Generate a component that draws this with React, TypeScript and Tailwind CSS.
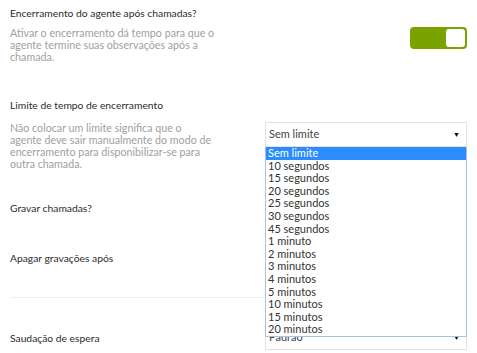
const options = [
  "Sem limite",
  "10 segundos",
  "15 segundos",
  "20 segundos",
  "25 segundos",
  "30 segundos",
  "45 segundos",
  "1 minuto",
  "2 minutos",
  "3 minutos",
  "4 minutos",
  "5 minutos",
  "10 minutos",
  "15 minutos",
  "20 minutos",
];

const SelectBox = ({ value }: { value: string }) => (
  <div className="flex h-[25px] w-[202px] items-center justify-between border border-[#e3e3e3] bg-white pl-[3px] pr-[6px] text-[11px] text-[#444]">
    <span>{value}</span>
    <span className="text-[7px] leading-none text-black">▼</span>
  </div>
);

export default function App() {
  return (
    <div className="h-[353px] w-[477px] overflow-hidden bg-white px-[10px] font-['Lato',sans-serif] text-[11px]">
      {/* wrap-up toggle */}
      <div className="flex justify-between pt-[6px]">
        <div className="w-[220px]">
          <h3 className="text-[10.3px] leading-[14px] text-[#2b2b2b]">
            Encerramento do agente após chamadas?
          </h3>
          <p className="mt-[7px] text-[10.7px] leading-[12px] text-[#a0a0a0]">
            Ativar o encerramento dá tempo para que o
            <br />
            agente termine suas observações após a
            <br />
            chamada.
          </p>
        </div>
        <div className="mt-[21px] flex h-[22px] w-[57px] justify-end rounded-[4px] bg-[#7aa300] p-[2px]">
          <div className="h-full w-[19px] rounded-[3px] bg-white" />
        </div>
      </div>

      {/* wrap-up limit */}
      <div className="mt-[35px] flex justify-between">
        <div className="w-[230px]">
          <h3 className="text-[10.3px] leading-[14px] text-[#2b2b2b]">
            Limite de tempo de encerramento
          </h3>
          <p className="mt-[10px] text-[10.7px] leading-[12px] text-[#a0a0a0]">
            Não colocar um limite significa que o
            <br />
            agente deve sair manualmente do modo de
            <br />
            encerramento para disponibilizar-se para
            <br />
            outra chamada.
          </p>
        </div>
        <div className="relative z-10 mt-[24px]">
          <SelectBox value="Sem limite" />
          <ul className="absolute left-0 top-[25px] w-[202px] border border-t-0 border-[#a9c1e6] bg-white text-[11px] text-[#333]">
            {options.map((o, i) => (
              <li
                key={o}
                className={`flex h-[12.6px] items-center pl-[2px] ${
                  i === 0 ? "bg-[#2a8cff] text-white" : ""
                }`}
              >
                {o}
              </li>
            ))}
          </ul>
        </div>
      </div>

      <h3 className="mt-[31px] text-[10.3px] leading-[14px] text-[#2b2b2b]">
        Gravar chamadas?
      </h3>
      <h3 className="mt-[36px] text-[10.3px] leading-[14px] text-[#2b2b2b]">
        Apagar gravações após
      </h3>

      <div className="mt-[32px] h-px bg-[#efefef]" />

      <div className="mt-[27px] flex items-center justify-between">
        <h3 className="text-[10.3px] leading-[14px] text-[#2b2b2b]">
          Saudação de espera
        </h3>
        <SelectBox value="Padrão" />
      </div>
    </div>
  );
}
